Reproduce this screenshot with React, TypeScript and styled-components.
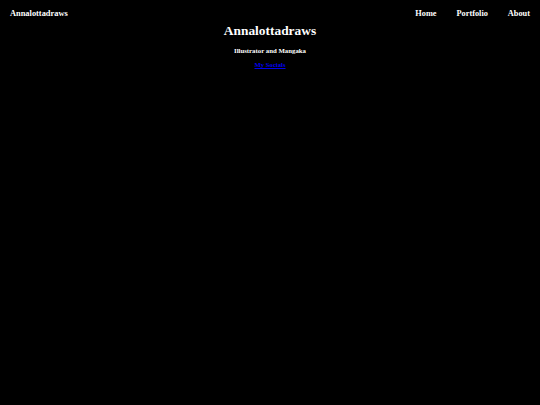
import React from 'react';
import styled, { createGlobalStyle } from 'styled-components';

const GlobalStyle = createGlobalStyle`
  html, body {
    margin: 0;
    padding: 0;
    background: #000;
    height: 100%;
  }
  body {
    font-family: "Liberation Serif", "Times New Roman", serif;
    color: #fff;
  }
`;

const Page = styled.div`
  min-height: 405px;
  background: #000;
`;

const NavBar = styled.nav`
  display: flex;
  align-items: center;
  justify-content: space-between;
  padding: 8px 10px 0 10px;
  height: 10px;
`;

const Brand = styled.div`
  font-size: 8.4px;
  font-weight: 700;
`;

const NavLinks = styled.ul`
  display: flex;
  gap: 20px;
  list-style: none;
  margin: 0;
  padding: 0;
`;

const NavItem = styled.li`
  font-size: 8.3px;
  font-weight: 700;
`;

const Hero = styled.header`
  display: flex;
  flex-direction: column;
  align-items: center;
  padding-top: 5px;
`;

const Title = styled.h1`
  font-size: 13.4px;
  font-weight: 700;
  margin: 0;
  line-height: 16px;
`;

const Subtitle = styled.h3`
  font-size: 6.8px;
  font-weight: 700;
  margin: 8px 0 0 0;
  line-height: 8px;
`;

const SocialLink = styled.a`
  font-size: 6.7px;
  font-weight: 700;
  color: #0000ee;
  margin-top: 6px;
  line-height: 8px;
`;

const App: React.FC = () => {
  return (
    <Page>
      <GlobalStyle />
      <NavBar>
        <Brand>Annalottadraws</Brand>
        <NavLinks>
          <NavItem>Home</NavItem>
          <NavItem>Portfolio</NavItem>
          <NavItem>About</NavItem>
        </NavLinks>
      </NavBar>
      <Hero>
        <Title>Annalottadraws</Title>
        <Subtitle>Illustrator and Mangaka</Subtitle>
        <SocialLink href="#">My Socials</SocialLink>
      </Hero>
    </Page>
  );
};

export default App;
